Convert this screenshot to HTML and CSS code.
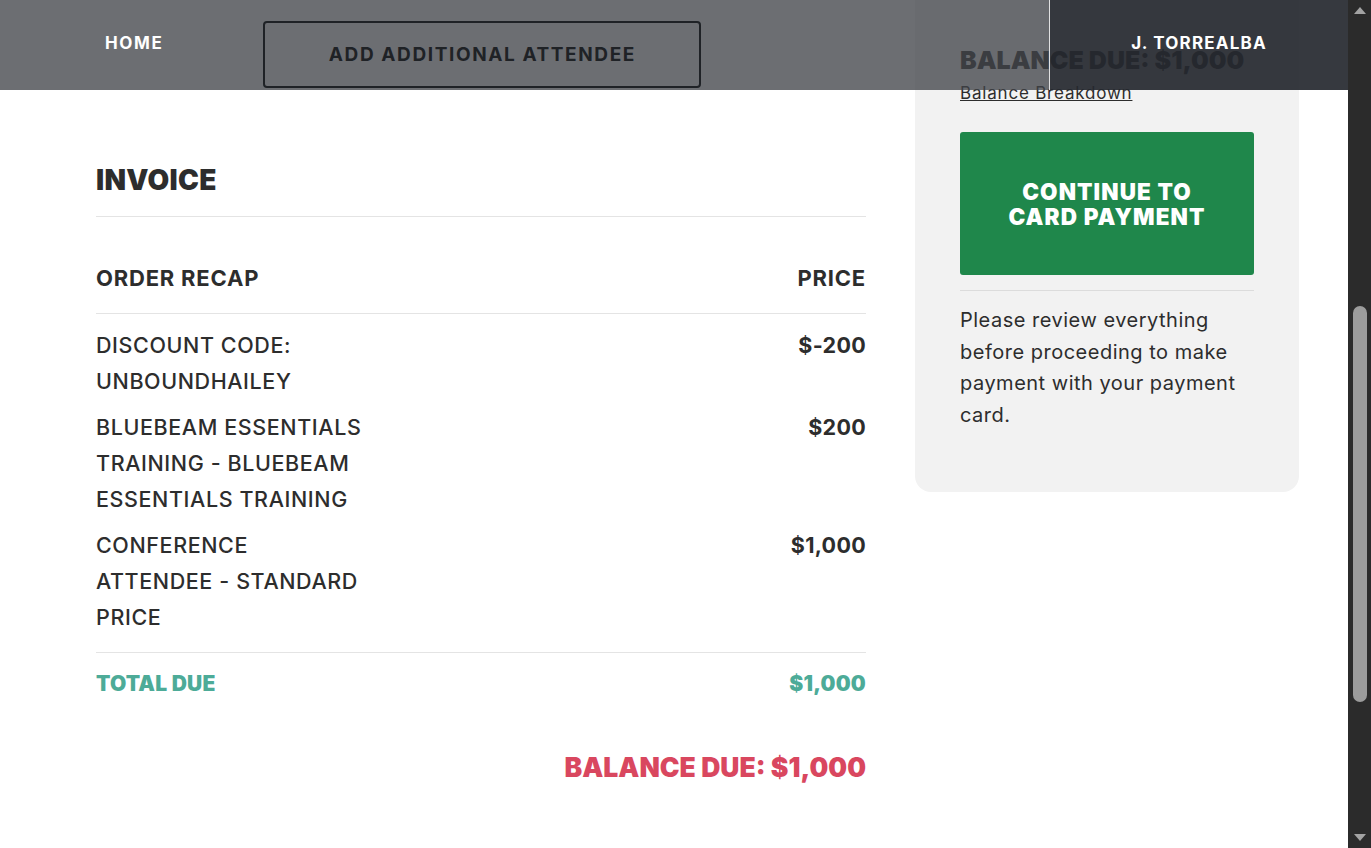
FILE: index.html
```html
<!DOCTYPE html>
<html lang="en">
<head>
  <meta charset="UTF-8" />
  <meta name="viewport" content="width=device-width, initial-scale=1.0" />
  <title>Invoice</title>
  <link rel="stylesheet" href="styles.css">
</head>
<body>
  <div class="viewport">
    <!-- page content, scrolled a little -->
    <div class="page">
      <section class="invoice">
        <h2 class="invoice-title">INVOICE</h2>
        <div class="recap-head">
          <span>ORDER RECAP</span>
          <span>PRICE</span>
        </div>
        <div class="items">
          <div class="item">
            <div class="item-name">DISCOUNT CODE: UNBOUNDHAILEY</div>
            <div class="item-price">$-200</div>
          </div>
          <div class="item">
            <div class="item-name">BLUEBEAM ESSENTIALS TRAINING - BLUEBEAM ESSENTIALS TRAINING</div>
            <div class="item-price">$200</div>
          </div>
          <div class="item">
            <div class="item-name">CONFERENCE ATTENDEE - STANDARD PRICE</div>
            <div class="item-price">$1,000</div>
          </div>
        </div>
        <div class="total">
          <span>TOTAL DUE</span>
          <span>$1,000</span>
        </div>
        <div class="balance">BALANCE DUE: $1,000</div>
      </section>

      <aside class="summary">
        <h3 class="summary-balance">BALANCE DUE: $1,000</h3>
        <a href="#" class="breakdown">Balance Breakdown</a>
        <button class="pay-btn">CONTINUE TO<br>CARD PAYMENT</button>
        <hr class="summary-rule">
        <p class="summary-note">Please review everything before proceeding to make payment with your payment card.</p>
      </aside>
    </div>

    <!-- translucent top bar over the content -->
    <header class="topbar">
      <nav class="topbar-main">
        <a href="#" class="nav-home">HOME</a>
        <button class="add-btn">ADD ADDITIONAL ATTENDEE</button>
      </nav>
      <div class="topbar-user">J. TORREALBA</div>
    </header>
  </div>

  <div class="scrollbar">
    <span class="arrow arrow-up"></span>
    <span class="thumb"></span>
    <span class="arrow arrow-down"></span>
  </div>
</body>
</html>
```

FILE: styles.css
```css
/* Invoice review page */
body {
  margin: 0;
  padding: 0;
  display: flex;
  height: 848px;
  overflow: hidden;
  font-family: "Inter", "Liberation Sans", sans-serif;
  color: #2d2d2d;
  background: #fff;
}
.viewport {
  position: relative;
  flex: 1;
  overflow: hidden;
}
.page {
  display: flex;
  align-items: flex-start;
  gap: 49px;
  padding-left: 96px;
}

/* left column */
.invoice {
  width: 770px;
}
.invoice-title {
  margin: 163px 0 0;
  padding-bottom: 19px;
  font-size: 28px;
  line-height: 34px;
  font-weight: 900;
  letter-spacing: 0.3px;
  border-bottom: 1px solid #e4e4e4;
}
.recap-head {
  display: flex;
  justify-content: space-between;
  margin-top: 49px;
  padding-bottom: 23px;
  font-size: 22px;
  line-height: 24px;
  font-weight: 700;
  letter-spacing: 0.8px;
  border-bottom: 1px solid #e4e4e4;
}
.items {
  padding: 13px 0 7px;
  border-bottom: 1px solid #e4e4e4;
}
.item {
  display: flex;
  justify-content: space-between;
  margin-bottom: 10px;
  font-size: 21.5px;
  line-height: 36px;
  letter-spacing: 0.6px;
}
.item-name {
  width: 270px;
  font-weight: 500;
}
.item-price {
  font-weight: 700;
  letter-spacing: 0.3px;
}
.total {
  display: flex;
  justify-content: space-between;
  padding-top: 19px;
  font-size: 21px;
  line-height: 24px;
  font-weight: 900;
  letter-spacing: 0.2px;
  color: #4dab98;
}
.balance {
  margin-top: 55px;
  text-align: right;
  font-size: 26.5px;
  line-height: 32px;
  font-weight: 900;
  color: #d9475f;
}

/* right card */
.summary {
  width: 294px;
  margin-top: -20px;
  padding: 65px 45px 61px;
  background: #f2f2f2;
  border-radius: 16px;
}
.summary-balance {
  margin: 0;
  font-size: 25px;
  line-height: 30px;
  font-weight: 900;
}
.breakdown {
  display: block;
  margin-top: 8px;
  font-size: 17px;
  line-height: 20px;
  letter-spacing: 0.8px;
  color: #2d2d2d;
  text-decoration: underline;
}
.pay-btn {
  display: block;
  width: 100%;
  height: 143px;
  margin-top: 29px;
  border: none;
  border-radius: 3px;
  background: #1f874b;
  color: #fff;
  font-family: inherit;
  font-size: 22.5px;
  line-height: 25px;
  font-weight: 900;
  letter-spacing: 1.1px;
  cursor: pointer;
}
.summary-rule {
  margin: 15px 0 0;
  border: none;
  border-top: 1px solid #dcdcdc;
}
.summary-note {
  margin: 14px 0 0;
  font-size: 20px;
  line-height: 31.5px;
  letter-spacing: 0.5px;
}

/* top bar */
.topbar {
  position: absolute;
  top: 0;
  left: 0;
  right: 0;
  height: 90px;
  display: flex;
}
.topbar-main {
  flex: 1;
  display: flex;
  align-items: center;
  background: rgba(64, 67, 72, 0.77);
}
.nav-home {
  margin-left: 105px;
  margin-right: 100px;
  padding-bottom: 4px;
  color: #fff;
  text-decoration: none;
  font-size: 17px;
  font-weight: 700;
  letter-spacing: 1.6px;
}
.add-btn {
  width: 438px;
  height: 67px;
  margin-top: 19px;
  border: 2px solid #1f2226;
  border-radius: 4px;
  background: transparent;
  color: #1f2226;
  font-family: inherit;
  font-size: 19px;
  font-weight: 700;
  letter-spacing: 1.6px;
}
.topbar-user {
  width: 299px;
  display: flex;
  align-items: center;
  justify-content: center;
  padding-bottom: 4px;
  box-sizing: border-box;
  border-left: 1px solid rgba(255, 255, 255, 0.85);
  background: rgba(37, 40, 47, 0.92);
  color: #fff;
  font-size: 17px;
  font-weight: 700;
  letter-spacing: 1.2px;
}

/* fake window scrollbar */
.scrollbar {
  width: 23px;
  height: 848px;
  background: #2b2b2b;
  display: flex;
  flex-direction: column;
  align-items: center;
}
.arrow {
  width: 0;
  height: 0;
  border-left: 6px solid transparent;
  border-right: 6px solid transparent;
}
.arrow-up {
  margin-top: 7px;
  border-bottom: 7px solid #a3a3a3;
}
.arrow-down {
  margin-top: auto;
  margin-bottom: 7px;
  border-top: 7px solid #a3a3a3;
}
.thumb {
  width: 14px;
  height: 396px;
  margin-top: 292px;
  border-radius: 7px;
  background: #9c9c9c;
}
```
